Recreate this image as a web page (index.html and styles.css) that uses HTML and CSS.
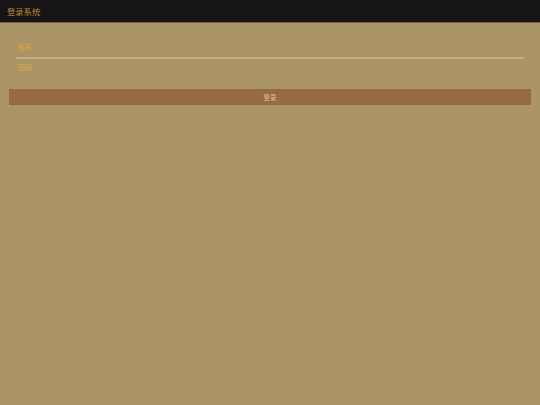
FILE: index.html
```html
<!DOCTYPE html>
<html lang="zh">
<head>
<meta charset="utf-8">
<title>登录系统</title>
<link rel="stylesheet" href="styles.css">
</head>
<body>
<header class="topbar">
  <span class="title">登录系统</span>
</header>
<main class="content">
  <div class="fields">
    <div class="field field-account">
      <span class="label">账号</span>
    </div>
    <div class="field field-password">
      <span class="label">密码</span>
    </div>
  </div>
  <button class="login-btn" type="button">登录</button>
</main>
</body>
</html>
```
FILE: styles.css
```css
html, body {
  margin: 0;
  padding: 0;
}
body {
  width: 540px;
  height: 405px;
  background: #ab9566;
  font-family: "Noto Sans CJK SC", "Noto Sans", sans-serif;
  overflow: hidden;
}
.topbar {
  height: 22px;
  background: #171416;
  border-bottom: 1px solid #6f5e44;
  display: flex;
  align-items: center;
  padding-left: 7px;
}
.title {
  font-size: 8.3px;
  line-height: 10px;
  color: #b38a33;
}
.content {
  padding: 19px 9px 0 9px;
  display: flex;
  flex-direction: column;
}
.fields {
  padding: 0 7px;
  display: flex;
  flex-direction: column;
}
.field {
  padding-left: 2px;
}
.field-account {
  height: 15px;
  border-bottom: 2px solid #c2ae86;
}
.field-password {
  padding-top: 3px;
  height: 14px;
}
.label {
  display: block;
  font-size: 7px;
  line-height: 10px;
  color: #dfa83c;
}
.login-btn {
  margin-top: 13px;
  height: 16px;
  box-sizing: border-box;
  background: #976b3f;
  border: 1px solid #8e6a45;
  color: #d8c39e;
  font-family: "Noto Sans CJK SC", "Noto Sans", sans-serif;
  font-size: 6.5px;
  line-height: 10px;
  padding: 0;
}
```
